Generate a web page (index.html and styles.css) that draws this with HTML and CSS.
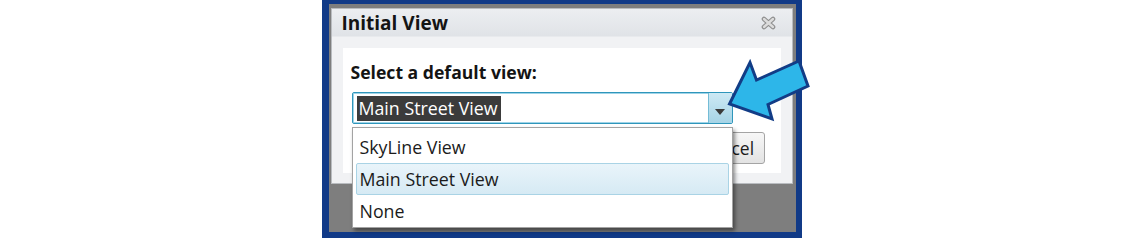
FILE: index.html
```html
<!DOCTYPE html>
<html>
<head>
<meta charset="utf-8">
<link rel="stylesheet" href="styles.css">
</head>
<body>
<div class="frame">
  <div class="dialog">
    <div class="titlebar">
      <span class="title">Initial View</span>
      <svg class="close" width="15" height="14" viewBox="0 0 15 14">
        <path d="M3 3 L12 11 M12 3 L3 11" stroke="#8d8d8d" stroke-width="4.6" stroke-linecap="round"/>
        <path d="M3 3 L12 11 M12 3 L3 11" stroke="#dcdcdc" stroke-width="2.4" stroke-linecap="round"/>
      </svg>
    </div>
    <div class="body">
      <div class="panel">
        <div class="label">Select a default view:</div>
        <div class="combo-wrap">
          <div class="combo">
            <span class="sel">Main Street View</span>
            <span class="drop">
              <svg width="10" height="6" viewBox="0 0 10 6"><path d="M0 0 H10 L5 6 Z" fill="#3a3a3a"/></svg>
            </span>
          </div>
          <ul class="popup">
            <li>SkyLine View</li>
            <li class="hl">Main Street View</li>
            <li>None</li>
          </ul>
        </div>
        <div class="buttons">
          <button class="btn">OK</button>
          <button class="btn">Cancel</button>
        </div>
      </div>
    </div>
  </div>
  <svg class="pointer" width="95" height="70" viewBox="720 55 95 70">
    <path d="M729.5 104 L750 62.5 L756.5 80 L799 61 L808 86 L768 104.5 L772 119 Z" fill="#2db6e9" stroke="#123c86" stroke-width="3" stroke-linejoin="miter"/>
  </svg>
</div>
</body>
</html>
```

FILE: styles.css
```css
html, body {
  margin: 0;
  padding: 0;
  background: #ffffff;
}

body {
  display: flex;
  justify-content: center;
  font-family: "Open Sans", "Noto Sans", sans-serif;
  color: #1b1b1b;
}

.frame {
  position: relative;
  width: 480px;
  height: 238px;
  box-sizing: border-box;
  border-style: solid;
  border-color: #113a87;
  border-width: 4px 6px 6px 7px;
  background: #7e7e7e;
  padding: 4px 3px 0 2px;
}

.dialog {
  width: 462px;
  height: 176px;
  box-sizing: border-box;
  background: #eff0f2;
  border: 1px solid #b9bcc0;
  display: flex;
  flex-direction: column;
}

.titlebar {
  height: 27px;
  flex: none;
  display: flex;
  align-items: center;
  justify-content: space-between;
  padding: 0 16px 0 10px;
  background: linear-gradient(#eceef1, #e0e3e7);
  border-bottom: 1px solid #e8eaed;
}

.title {
  font-weight: 700;
  font-size: 19px;
  line-height: 27px;
  padding-top: 2px;
  color: #141414;
}

.close {
  display: block;
  margin-top: 1px;
}

.body {
  flex: 1;
  padding: 11px 11px 10px 11px;
  background: #f1f2f4;
}

.panel {
  height: 100%;
  box-sizing: border-box;
  background: #ffffff;
  padding: 13px 16px 0 8px;
}

.label {
  font-weight: 700;
  font-size: 17.6px;
  line-height: 22px;
  color: #141414;
}

.combo-wrap {
  position: relative;
  margin-top: 9px;
  margin-left: 1px;
  width: 381px;
}

.combo {
  height: 32px;
  box-sizing: border-box;
  border: 1px solid #2f96bb;
  border-radius: 2px;
  box-shadow: inset 0 0 0 1px #9fd4e8;
  display: flex;
  align-items: center;
  justify-content: space-between;
  background: #ffffff;
}

.sel {
  margin-left: 4px;
  height: 25px;
  line-height: 25px;
  padding: 0 3px 0 2px;
  background: #3b3b3b;
  color: #ffffff;
  font-size: 17.8px;
}

.drop {
  align-self: stretch;
  width: 24px;
  box-sizing: border-box;
  border-left: 1px solid #74bcd6;
  background: linear-gradient(#cde9f4, #a6d4e6);
  display: flex;
  align-items: center;
  justify-content: center;
  padding-top: 7px;
}

.drop svg {
  display: block;
}

.popup {
  position: absolute;
  top: 35px;
  left: 0;
  width: 381px;
  box-sizing: border-box;
  margin: 0;
  padding: 3px 3px 0 3px;
  list-style: none;
  background: #ffffff;
  border: 1px solid #a3a3a3;
  box-shadow: 2px 3px 4px rgba(0, 0, 0, 0.45);
  z-index: 2;
}

.popup li {
  height: 32px;
  box-sizing: border-box;
  line-height: 30px;
  padding-left: 3px;
  border: 1px solid transparent;
  border-radius: 2px;
  font-size: 17.8px;
  color: #1b1b1b;
}

.popup li.hl {
  background: linear-gradient(#e9f4fa, #d6eaf4);
  border-color: #a9d3e5;
}

.buttons {
  display: flex;
  justify-content: flex-end;
  gap: 8px;
  margin-top: 8px;
}

.btn {
  width: 75px;
  height: 32px;
  border: 1px solid #a4a4a4;
  border-radius: 3px;
  background: linear-gradient(#f7f7f7, #e3e3e3);
  font-family: "Open Sans", "Noto Sans", sans-serif;
  font-size: 17.5px;
  color: #1b1b1b;
  padding: 0;
}

.pointer {
  position: absolute;
  left: 391px;
  top: 51px;
  z-index: 3;
  overflow: visible;
}
```
